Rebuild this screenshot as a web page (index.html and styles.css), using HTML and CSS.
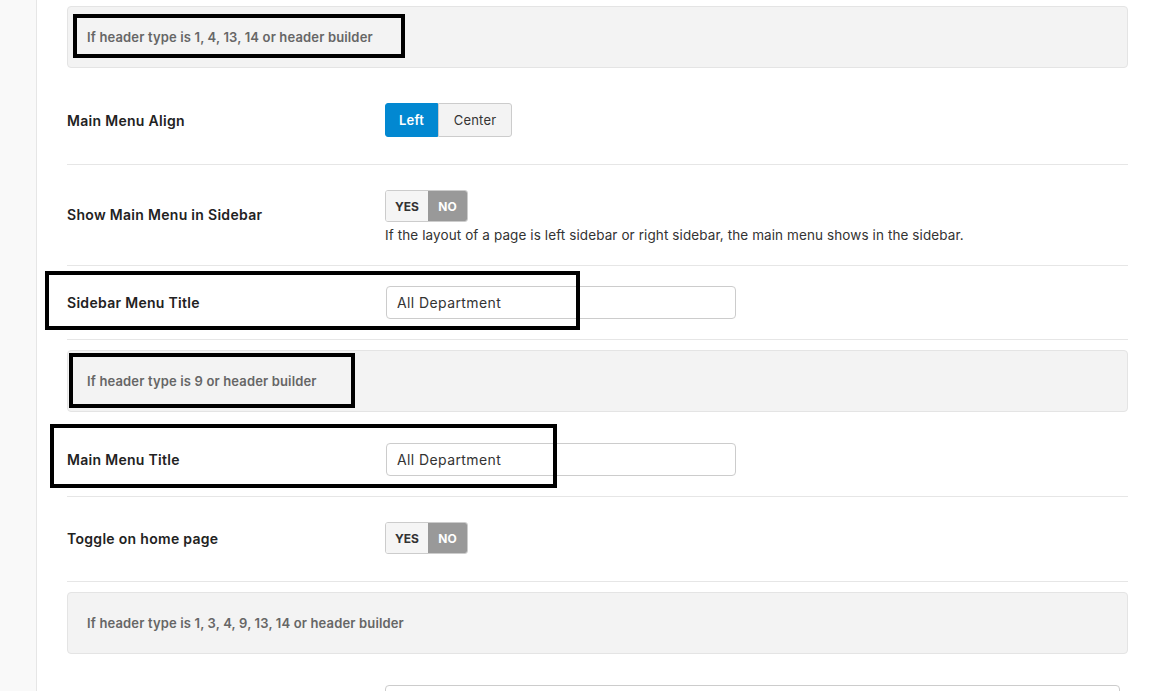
FILE: index.html
```html
<!DOCTYPE html>
<html>
	<head>
		<title>Header Options</title>
		<link rel="stylesheet" href="styles.css">
	</head>
	<body>
	<div class="page">
		<div class="sidebar"></div>

		<div class="options">
			<div class="notice">If header type is 1, 4, 13, 14 or header builder</div>

			<div class="row">
				<div class="label">Main Menu Align</div>
				<div class="control">
					<div class="btn_group">
						<button type="button" class="btn active">Left</button>
						<button type="button" class="btn">Center</button>
					</div>
				</div>
			</div>

			<div class="row">
				<div class="label">Show Main Menu in Sidebar</div>
				<div class="control">
					<div class="toggle">
						<span class="yes">YES</span>
						<span class="no">NO</span>
					</div>
					<div class="desc">If the layout of a page is left sidebar or right sidebar, the main menu shows in the sidebar.</div>
				</div>
			</div>

			<div class="row">
				<div class="label">Sidebar Menu Title</div>
				<div class="control">
					<input type="text" class="text_input" value="All Department">
				</div>
			</div>

			<div class="notice">If header type is 9 or header builder</div>

			<div class="row">
				<div class="label">Main Menu Title</div>
				<div class="control">
					<input type="text" class="text_input" value="All Department">
				</div>
			</div>

			<div class="row">
				<div class="label">Toggle on home page</div>
				<div class="control">
					<div class="toggle">
						<span class="yes">YES</span>
						<span class="no">NO</span>
					</div>
				</div>
			</div>

			<div class="notice">If header type is 1, 3, 4, 9, 13, 14 or header builder</div>

			<div class="row last">
				<div class="label"></div>
				<div class="control">
					<input type="text" class="text_input wide" value="">
				</div>
			</div>
		</div>

		<!-- highlight boxes drawn over the screenshot -->
		<div class="mark mark1"></div>
		<div class="mark mark2"></div>
		<div class="mark mark3"></div>
		<div class="mark mark4"></div>
	</div>
	</body>
</html>
```
FILE: styles.css
```css
html,
body {
  height: 100%;
}
body {
  margin: 0;
  background: #fff;
  font-family: "Inter", "Noto Sans", sans-serif;
  color: #222;
  overflow: hidden;
}
.page {
  position: relative;
  display: flex;
  min-height: 100%;
}
.sidebar {
  width: 36px;
  flex: none;
  background: #f9f9f9;
  border-right: 1px solid #e6e6e6;
}
.options {
  width: 1061px;
  margin-left: 30px;
  padding-top: 6px;
}
.notice {
  display: flex;
  align-items: center;
  height: 62px;
  box-sizing: border-box;
  margin-bottom: 9px;
  padding: 0 19px;
  background: #f3f3f3;
  border: 1px solid #e4e4e4;
  border-radius: 4px;
  font-size: 13px;
  letter-spacing: 0.15px;
  font-weight: 600;
  color: #666;
}
.row {
  display: flex;
  align-items: center;
  padding: 20px 0;
  border-bottom: 1px solid #e6e6e6;
}
.row:has(+ .notice) {
  margin-bottom: 10px;
}
.notice + .row {
  padding-top: 22px;
}
.notice:first-child + .row {
  padding-top: 21px;
}
.row.last {
  border-bottom: none;
}
.label {
  width: 318px;
  flex: none;
  line-height: 20px;
  font-size: 14px;
  letter-spacing: 0.3px;
  font-weight: 600;
  color: #222;
}
.control {
  flex: 1;
}
.btn_group {
  display: flex;
  margin: 5px 0 7px;
}
.btn {
  width: 74px;
  height: 34px;
  padding: 0;
  font-family: inherit;
  font-size: 13px;
  letter-spacing: 0.2px;
  color: #333;
  background: #f3f3f3;
  border: 1px solid #ccc;
  border-radius: 0 3px 3px 0;
}
.btn.active {
  width: 53px;
  color: #fff;
  font-weight: 600;
  background: #0288d1;
  border-color: #0288d1;
  border-radius: 3px 0 0 3px;
}
.toggle {
  display: inline-flex;
  vertical-align: top;
  height: 32px;
  margin: 5px 0 7px;
  border: 1px solid #ccc;
  border-radius: 3px;
  overflow: hidden;
  font-size: 12px;
  font-weight: 700;
  box-sizing: border-box;
}
.toggle span {
  display: flex;
  align-items: center;
  justify-content: center;
}
.toggle .yes {
  width: 42px;
  background: #f5f5f5;
  color: #333;
}
.toggle .no {
  width: 39px;
  background: #999;
  color: #fff;
}
.desc {
  margin-top: -4px;
  line-height: 20px;
  font-size: 13.5px;
  letter-spacing: 0.1px;
  color: #333;
}
.text_input {
  display: block;
  width: 350px;
  height: 33px;
  margin-left: 1px;
  padding: 0 10px;
  box-sizing: border-box;
  font-family: inherit;
  font-size: 14px;
  letter-spacing: 0.4px;
  color: #333;
  border: 1px solid #ccc;
  border-radius: 4px;
}
.text_input.wide {
  width: 735px;
  margin-left: 0;
}
.mark {
  position: absolute;
  border: 4px solid #000;
  box-sizing: border-box;
}
.mark1 {
  left: 73px;
  top: 14px;
  width: 332px;
  height: 44px;
}
.mark2 {
  left: 45px;
  top: 271px;
  width: 535px;
  height: 59px;
}
.mark3 {
  left: 69px;
  top: 353px;
  width: 286px;
  height: 55px;
}
.mark4 {
  left: 50px;
  top: 424px;
  width: 507px;
  height: 64px;
}
```
